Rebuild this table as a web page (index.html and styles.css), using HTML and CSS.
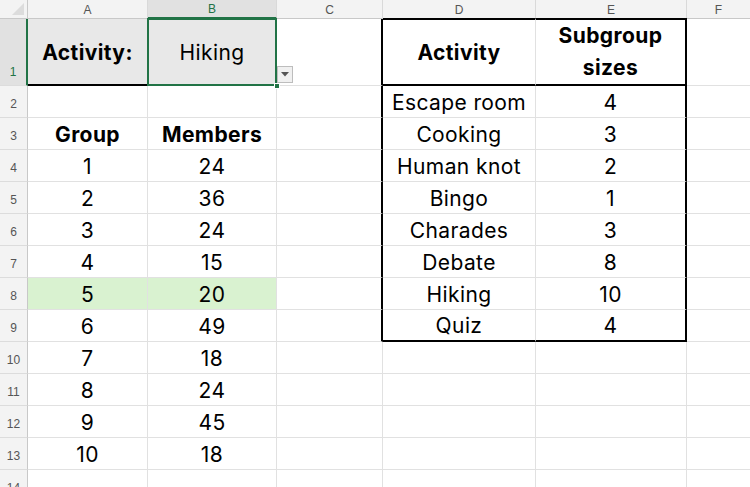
FILE: index.html
```html
<!DOCTYPE html>
<html>
<head>
<meta charset="utf-8">
<link rel="stylesheet" href="styles.css">
</head>
<body>
<div class="sheet">
  <div class="corner"><svg width="14" height="14" viewBox="0 0 14 14"><polygon points="13,1 13,13 1,13" fill="#dcdcdc"/></svg></div>
  <div class="ch">A</div>
  <div class="ch sel">B</div>
  <div class="ch">C</div>
  <div class="ch">D</div>
  <div class="ch">E</div>
  <div class="ch last">F</div>

  <div class="rh tall sel">1</div>
  <div class="c gray bold bb">Activity:</div>
  <div class="c gray b1">Hiking
    <div class="selbox"></div>
    <div class="handle"></div>
    <div class="dd"><svg width="8" height="5" viewBox="0 0 8 5"><polygon points="0,0 8,0 4,4.5" fill="#555"/></svg></div>
  </div>
  <div class="c tl"></div>
  <div class="c bold tt bb">Activity</div>
  <div class="c bold tt bb tr two">Subgroup<br>sizes</div>
  <div class="c last"></div>

  <div class="rh">2</div>
  <div class="c"></div><div class="c"></div><div class="c tl"></div>
  <div class="c">Escape room</div><div class="c tr">4</div><div class="c last"></div>

  <div class="rh">3</div>
  <div class="c bold">Group</div><div class="c bold">Members</div><div class="c tl"></div>
  <div class="c">Cooking</div><div class="c tr">3</div><div class="c last"></div>

  <div class="rh">4</div>
  <div class="c">1</div><div class="c">24</div><div class="c tl"></div>
  <div class="c">Human knot</div><div class="c tr">2</div><div class="c last"></div>

  <div class="rh">5</div>
  <div class="c">2</div><div class="c">36</div><div class="c tl"></div>
  <div class="c">Bingo</div><div class="c tr">1</div><div class="c last"></div>

  <div class="rh">6</div>
  <div class="c">3</div><div class="c">24</div><div class="c tl"></div>
  <div class="c">Charades</div><div class="c tr">3</div><div class="c last"></div>

  <div class="rh">7</div>
  <div class="c">4</div><div class="c">15</div><div class="c tl"></div>
  <div class="c">Debate</div><div class="c tr">8</div><div class="c last"></div>

  <div class="rh">8</div>
  <div class="c green">5</div><div class="c green">20</div><div class="c tl"></div>
  <div class="c">Hiking</div><div class="c tr">10</div><div class="c last"></div>

  <div class="rh">9</div>
  <div class="c">6</div><div class="c">49</div><div class="c tl"></div>
  <div class="c bb">Quiz</div><div class="c tr bb">4</div><div class="c last"></div>

  <div class="rh">10</div>
  <div class="c">7</div><div class="c">18</div><div class="c"></div>
  <div class="c"></div><div class="c"></div><div class="c last"></div>

  <div class="rh">11</div>
  <div class="c">8</div><div class="c">24</div><div class="c"></div>
  <div class="c"></div><div class="c"></div><div class="c last"></div>

  <div class="rh">12</div>
  <div class="c">9</div><div class="c">45</div><div class="c"></div>
  <div class="c"></div><div class="c"></div><div class="c last"></div>

  <div class="rh">13</div>
  <div class="c">10</div><div class="c">18</div><div class="c"></div>
  <div class="c"></div><div class="c"></div><div class="c last"></div>

  <div class="rh">14</div>
  <div class="c"></div><div class="c"></div><div class="c"></div>
  <div class="c"></div><div class="c"></div><div class="c last"></div>
</div>
</body>
</html>
```

FILE: styles.css
```css
* { box-sizing: border-box; }
html, body { margin: 0; padding: 0; background: #fff; overflow: hidden; }
body { width: 750px; height: 487px; }

.sheet {
  display: grid;
  grid-template-columns: 28px 120px 129px 106px 153px 151px 63px;
  grid-template-rows: 19px 67px repeat(13, 32px);
  font-family: "Inter", "Liberation Sans", sans-serif;
  color: #000;
}

.corner {
  background: #f3f3f3;
  border-right: 1px solid #c8c8c8;
  border-bottom: 1px solid #c8c8c8;
  display: flex;
  align-items: flex-end;
  justify-content: flex-end;
  padding: 0 2px 2px 0;
}

.ch {
  background: #f3f3f3;
  border-right: 1px solid #d9d9d9;
  border-bottom: 1px solid #c8c8c8;
  font-family: "Liberation Sans", Arial, sans-serif;
  font-size: 12px;
  color: #555;
  display: flex;
  align-items: center;
  justify-content: center;
  padding-top: 1px;
}
.ch.sel {
  background: #e1e1e1;
  color: #217346;
  border-bottom: 2px solid #217346;
}
.ch.last { border-right: none; }

.rh {
  background: #f3f3f3;
  border-right: 1px solid #c8c8c8;
  border-bottom: 1px solid #dcdcdc;
  font-family: "Liberation Sans", Arial, sans-serif;
  font-size: 12px;
  color: #555;
  display: flex;
  align-items: flex-end;
  justify-content: center;
  padding-bottom: 6px;
}
.rh.sel {
  background: #e1e1e1;
  color: #217346;
  border-right: 2px solid #217346;
}

.c {
  border-right: 1px solid #e1e1e1;
  border-bottom: 1px solid #e1e1e1;
  display: flex;
  align-items: center;
  justify-content: center;
  font-size: 21px;
  letter-spacing: 0.4px;
  line-height: 1;
  white-space: nowrap;
  padding-top: 1px;
}
.c.last { border-right: none; }
.gray { background: #e8e8e8; }
.green { background: #d9f2d0; }
.bold { font-weight: 700; }
.two { line-height: 32px; text-align: center; padding-top: 0; }

.bb { border-bottom: 2px solid #000; }
.tt { border-top: 2px solid #000; margin-top: -1px; }
.tl { border-right: 2px solid #000; }
.tr { border-right: 2px solid #000; }

.b1 { position: relative; }
.selbox {
  position: absolute;
  left: -1px; top: -1px; right: -1px; bottom: -1px;
  border: 2px solid #217346;
  pointer-events: none;
}
.handle {
  position: absolute;
  right: -4px; bottom: -4px;
  width: 6px; height: 6px;
  background: #217346;
  border: 1px solid #fff;
}
.dd {
  position: absolute;
  left: calc(100% + 1px);
  bottom: 2px;
  width: 16px; height: 17px;
  background: #f0f0f0;
  border: 1px solid #bdbdbd;
  display: flex;
  align-items: center;
  justify-content: center;
  z-index: 2;
}
```
